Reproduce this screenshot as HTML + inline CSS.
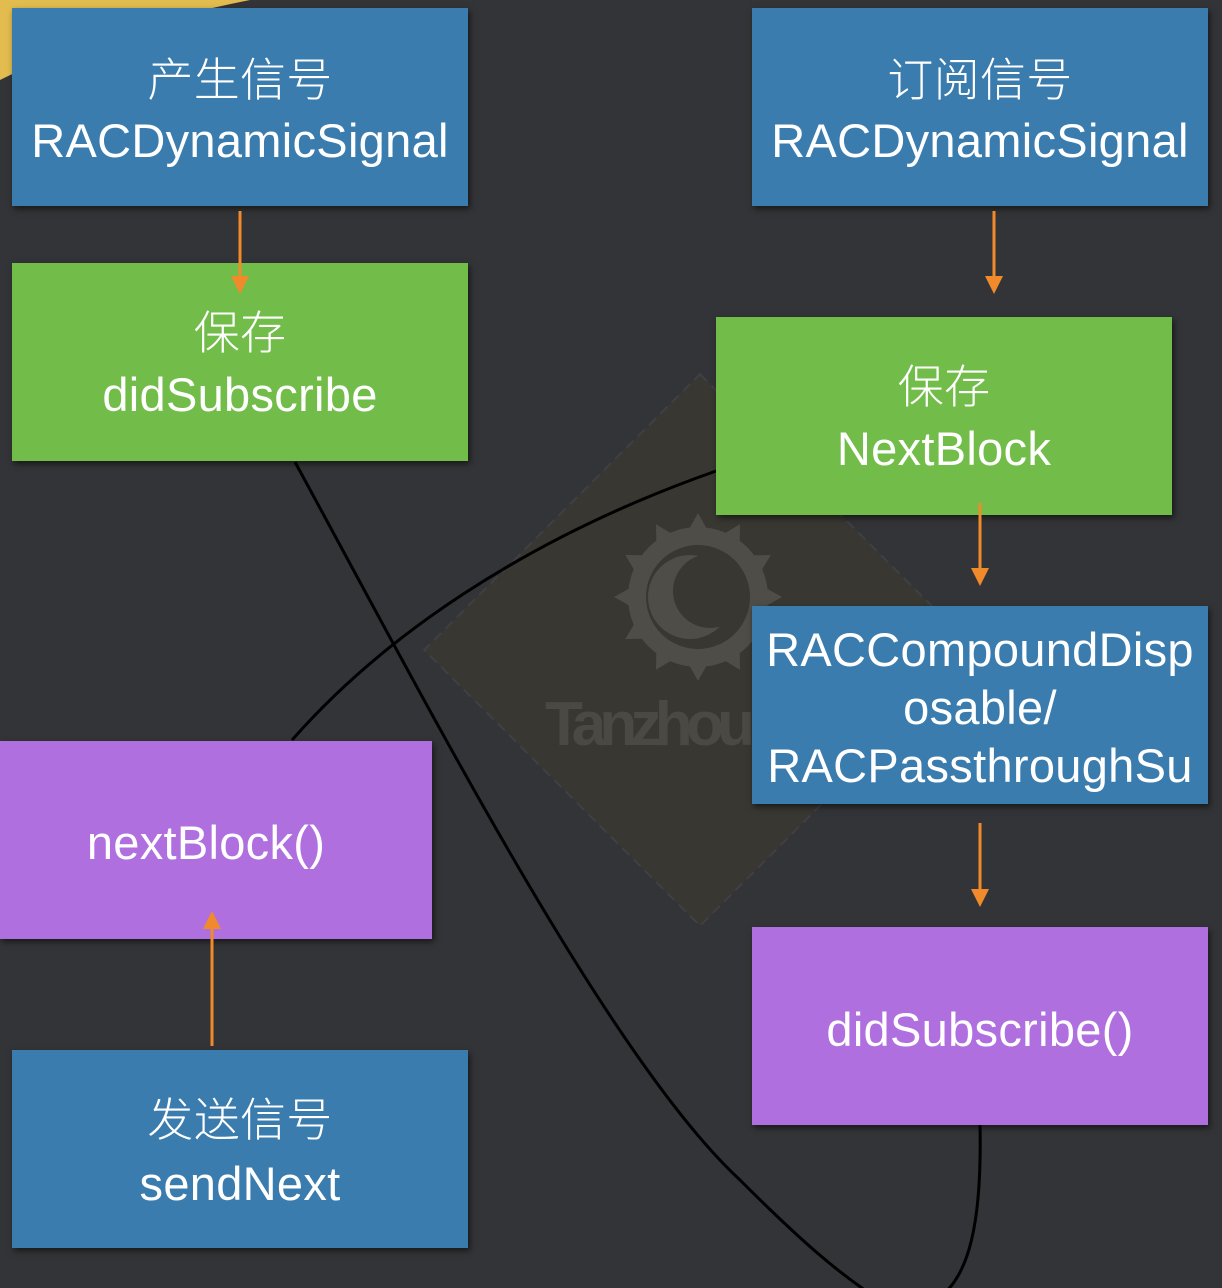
<!DOCTYPE html>
<html><head><meta charset="utf-8"><style>
html,body{margin:0;padding:0}
body{width:1222px;height:1288px;position:relative;overflow:hidden;background:#333437;font-family:"Liberation Sans","Noto Sans CJK SC",sans-serif;color:#fff}
.b{position:absolute;width:456px;height:198px;box-shadow:2px 3px 6px rgba(0,0,0,.55);overflow:hidden}
.blue{background:#3b7cae}.green{background:#72bd4a}.purple{background:#b06fdf}
.t{position:absolute;left:-40px;right:-40px;text-align:center;white-space:nowrap;font-size:47px;line-height:56px;height:56px;letter-spacing:0.3px}
.cj{font-size:46px;font-weight:300}
svg{position:absolute;left:0;top:0}
</style></head><body>
<svg width="1222" height="1288">
 <path d="M0 0 H250 Q100 30 0 80 Z" fill="#e2bc4f"/>
 <g transform="translate(700 650) rotate(45)">
  <rect x="-195" y="-195" width="390" height="390" fill="#383731" stroke="#3f4044" stroke-width="2" stroke-dasharray="10 6"/>
 </g>
 <g fill="#4e4d48">
  <circle cx="698" cy="597" r="70"/>
  <g transform="translate(698 597)">
   <path d="M0 -84 L10 -66 L-10 -66 Z M0 84 L10 66 L-10 66 Z M-84 0 L-66 10 L-66 -10 Z M84 0 L66 10 L66 -10 Z" />
   <path d="M0 -84 L10 -66 L-10 -66 Z M0 84 L10 66 L-10 66 Z M-84 0 L-66 10 L-66 -10 Z M84 0 L66 10 L66 -10 Z" transform="rotate(30)"/>
   <path d="M0 -84 L10 -66 L-10 -66 Z M0 84 L10 66 L-10 66 Z M-84 0 L-66 10 L-66 -10 Z M84 0 L66 10 L66 -10 Z" transform="rotate(60)"/>
  </g>
 </g>
 <circle cx="698" cy="597" r="52" fill="#383731"/>
 <circle cx="690" cy="597" r="42" fill="#4e4d48"/>
 <circle cx="710" cy="591" r="37" fill="#383731"/>
 <text x="545" y="745" font-family="Liberation Sans" font-weight="bold" font-size="62" fill="#4a4944" textLength="210">Tanzhou</text>
 <path d="M295 462 C430 710 610 1060 740 1180 C800 1240 840 1275 880 1300" fill="none" stroke="#000" stroke-width="3"/>
 <path d="M292 740 C380 640 520 540 716 471" fill="none" stroke="#000" stroke-width="3"/>
 <path d="M980 1125 C982 1220 970 1280 935 1300" fill="none" stroke="#000" stroke-width="3"/>
</svg>
<div class="b blue" style="left:12px;top:8px"><div class="t cj" style="top:44px">产生信号</div><div class="t" style="top:105px">RACDynamicSignal</div></div>
<div class="b green" style="left:12px;top:263px"><div class="t cj" style="top:42px">保存</div><div class="t" style="top:104px">didSubscribe</div></div>
<div class="b blue" style="left:752px;top:8px"><div class="t cj" style="top:44px">订阅信号</div><div class="t" style="top:105px">RACDynamicSignal</div></div>
<div class="b green" style="left:716px;top:317px"><div class="t cj" style="top:42px">保存</div><div class="t" style="top:104px">NextBlock</div></div>
<div class="b blue" style="left:752px;top:606px"><div class="t" style="top:16px">RACCompoundDisp</div><div class="t" style="top:74px">osable/</div><div class="t" style="top:132px">RACPassthroughSu</div></div>
<div class="b purple" style="left:0;top:741px;width:432px"><div class="t" style="top:74px;left:-50px;right:-30px">nextBlock()</div></div>
<div class="b purple" style="left:752px;top:927px"><div class="t" style="top:75px">didSubscribe()</div></div>
<div class="b blue" style="left:12px;top:1050px"><div class="t cj" style="top:42px">发送信号</div><div class="t" style="top:106px">sendNext</div></div>
<svg width="1222" height="1288" style="pointer-events:none">
 <g stroke="#f08a2a" stroke-width="3" fill="#f08a2a">
  <line x1="240" y1="211" x2="240" y2="280"/><path d="M231 276 L249 276 L240 294 Z" stroke="none"/>
  <line x1="994" y1="211" x2="994" y2="280"/><path d="M985 276 L1003 276 L994 294 Z" stroke="none"/>
  <line x1="980" y1="503" x2="980" y2="572"/><path d="M971 568 L989 568 L980 586 Z" stroke="none"/>
  <line x1="980" y1="823" x2="980" y2="893"/><path d="M971 889 L989 889 L980 907 Z" stroke="none"/>
  <line x1="212" y1="1046" x2="212" y2="925"/><path d="M203 929 L221 929 L212 911 Z" stroke="none"/>
 </g>
</svg>
</body></html>
